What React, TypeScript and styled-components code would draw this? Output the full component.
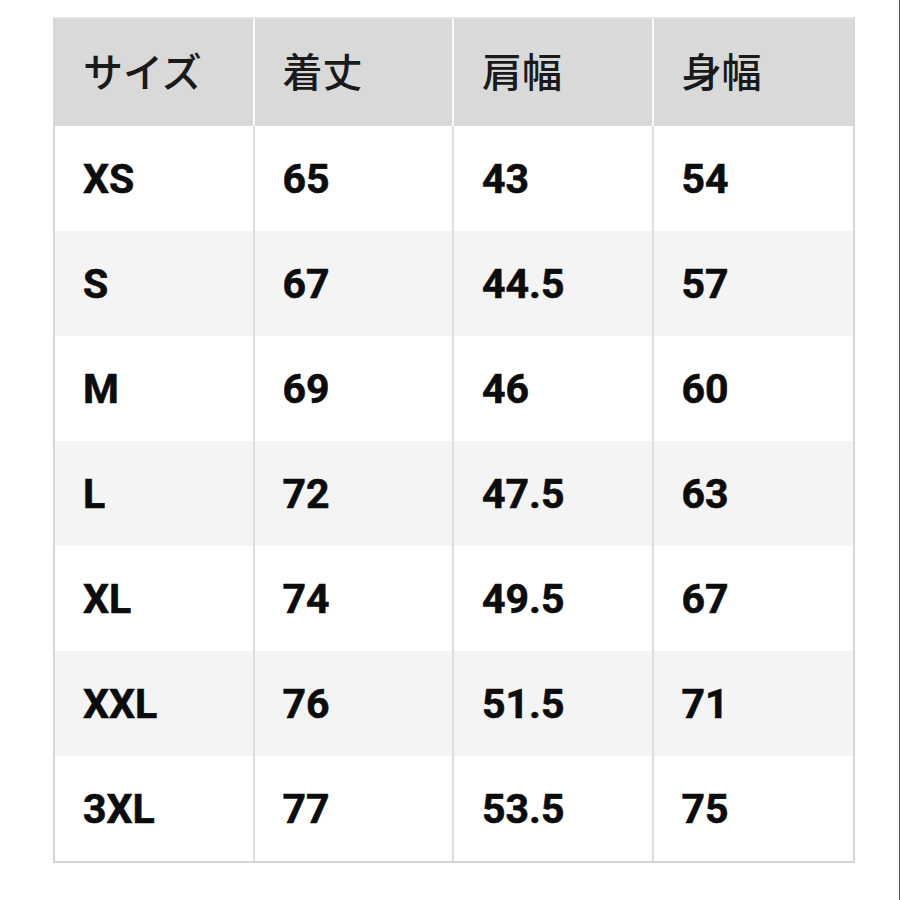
import React from 'react';
import styled, { createGlobalStyle } from 'styled-components';

const GlobalStyle = createGlobalStyle`
  html, body {
    margin: 0;
    padding: 0;
    background: #fff;
  }
`;

const Page = styled.div`
  box-sizing: border-box;
  width: 900px;
  min-height: 900px;
  padding: 17px 0 0 53px;
  border-right: 1px solid #5a5a5a;
`;

const Table = styled.div`
  box-sizing: border-box;
  width: 802px;
  display: grid;
  grid-template-columns: repeat(4, 1fr);
  border: 2px solid #d6d6d6;
  border-top-color: #e4e4e4;
`;

const HeadCell = styled.div`
  box-sizing: border-box;
  height: 107px;
  display: flex;
  align-items: center;
  padding: 0 0 5px 28px;
  background: #d9d9d9;
  border-right: 2px solid #fbfbfb;
  font-family: 'Noto Sans CJK JP', sans-serif;
  font-size: 40px;
  font-weight: 500;
  color: #1a1a1a;

  &:nth-child(4) {
    border-right: none;
  }
`;

const Cell = styled.div<{ $shade: boolean }>`
  box-sizing: border-box;
  height: 105px;
  display: flex;
  align-items: center;
  padding-left: 28px;
  background: ${(p) => (p.$shade ? '#f4f4f4' : '#ffffff')};
  border-right: 2px solid #dedede;
  font-family: Roboto, 'Liberation Sans', sans-serif;
  font-size: 41px;
  font-weight: 700;
  color: #0c0c0c;
  -webkit-text-stroke: 0.6px #0c0c0c;

  &:nth-child(4n) {
    border-right: none;
  }
`;

const headers = ['サイズ', '着丈', '肩幅', '身幅'];

const rows = [
  ['XS', '65', '43', '54'],
  ['S', '67', '44.5', '57'],
  ['M', '69', '46', '60'],
  ['L', '72', '47.5', '63'],
  ['XL', '74', '49.5', '67'],
  ['XXL', '76', '51.5', '71'],
  ['3XL', '77', '53.5', '75'],
];

export default function App() {
  return (
    <Page>
      <GlobalStyle />
      <Table>
        {headers.map((h) => (
          <HeadCell key={h}>{h}</HeadCell>
        ))}
        {rows.map((r, i) =>
          r.map((v, j) => (
            <Cell key={`${i}-${j}`} $shade={i % 2 === 1}>
              {v}
            </Cell>
          )),
        )}
      </Table>
    </Page>
  );
}
